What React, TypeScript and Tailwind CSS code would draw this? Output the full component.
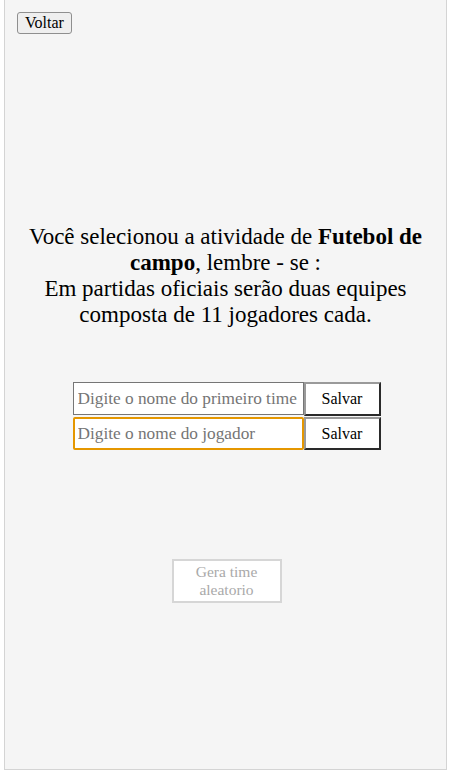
import React from "react";

export default function App() {
  const serif = { fontFamily: '"Liberation Serif", "DejaVu Serif", serif' };
  return (
    <div className="w-[449px] h-[775px] bg-white" style={serif}>
      <div className="ml-[4px] w-[443px] h-[770px] bg-[#f5f5f5] border-x border-b border-[#d4d4d4] flex flex-col">
        <div className="flex pl-[12px] pt-[12px]">
          <button className="h-[22px] w-[55px] text-[16px] leading-none text-black bg-[#efefef] border border-[#8f8f8f] rounded-[3px]">
            Voltar
          </button>
        </div>
        <div className="mt-[190px] text-center text-[23px] leading-[26px] text-black px-[16px]">
          Você selecionou a atividade de <b>Futebol de campo</b>, lembre - se :
          <br />
          Em partidas oficiais serão duas equipes composta de 11 jogadores cada.
        </div>
        <div className="mt-[54px] flex flex-col items-center gap-[1px] pl-[2px]">
          <div className="flex">
            <input
              className="w-[231px] h-[33px] border border-[#767676] bg-white px-[4px] text-[17.3px] text-black placeholder:text-[#757575] outline-none"
              placeholder="Digite o nome do primeiro time"
              style={serif}
            />
            <button className="w-[77px] h-[34px] bg-white text-[16px] text-black border-2 border-t-[#9a9a9a] border-l-[#9a9a9a] border-r-[#2a2a2a] border-b-[#2a2a2a]">
              Salvar
            </button>
          </div>
          <div className="flex">
            <input
              className="w-[231px] h-[33px] border-2 border-[#e59700] rounded-[2px] bg-white px-[3px] text-[17.3px] text-black placeholder:text-[#757575] outline-none"
              placeholder="Digite o nome do jogador"
              style={serif}
            />
            <button className="w-[77px] h-[33px] bg-white text-[16px] text-black border-2 border-t-[#9a9a9a] border-l-[#9a9a9a] border-r-[#2a2a2a] border-b-[#2a2a2a]">
              Salvar
            </button>
          </div>
        </div>
        <div className="mt-[109px] flex justify-center pl-[2px]">
          <button className="w-[110px] h-[44px] bg-white border-2 border-[#d6d6d6] text-[15.5px] leading-[18px] text-[#a9a9a9]">
            Gera time
            <br />
            aleatorio
          </button>
        </div>
      </div>
    </div>
  );
}
